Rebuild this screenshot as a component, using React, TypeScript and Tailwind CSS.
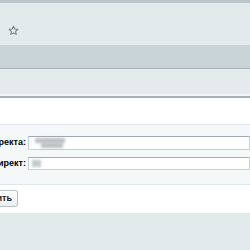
import React from "react";

const Star = () => (
  <svg width="11" height="11" viewBox="0 0 24 24" fill="none" stroke="#6f7d84" strokeWidth="2.2" strokeLinejoin="round">
    <path d="M12 2.5l2.9 6.1 6.6.8-4.9 4.5 1.3 6.6L12 17.2l-5.9 3.3 1.3-6.6-4.9-4.5 6.6-.8z" />
  </svg>
);

const Blur = ({ w, ml = 0 }: { w: number; ml?: number }) => (
  <span className="block h-[5px] bg-[#9aa3a7] blur-[1.5px] opacity-70" style={{ width: w, marginLeft: ml }} />
);

const App: React.FC = () => {
  return (
    <div className="h-screen w-full overflow-hidden bg-[#e1e9eb] font-['Liberation_Sans',Arial,sans-serif] text-[11px] text-black">
      {/* top toolbar */}
      <div className="h-[3px] bg-[#bcc7cb]" />
      <div className="flex h-[42px] items-center bg-[#e3eaec] pl-[8px] pt-[12px]">
        <Star />
      </div>
      <div className="h-[24px] border-b border-[#a9b4b9] bg-[#c9d4d9]" />
      <div className="h-[25px] bg-[#e4ebed]" />
      <div className="h-[2px] bg-[#f2f6f7]" />
      <div className="h-[2px] bg-[#a7b1b5]" />

      {/* content */}
      <div className="bg-white">
        <div className="h-[26px]" />
        <div className="border-y border-[#dfe7ea] bg-[#f4f8f9] pb-[14px] pt-[11px]">
          <div className="flex h-[14px] items-center">
            <div className="flex w-[26px] shrink-0 justify-end whitespace-nowrap text-[9px] font-bold">Адрес редиректа:</div>
            <div className="ml-[2px] h-[14px] flex-1 border border-[#c9d1d5] border-t-[#a2acb0] bg-white pl-[4px] pt-[1px]">
              <Blur w={30} ml={2} />
              <Blur w={22} ml={8} />
            </div>
          </div>
          <div className="mt-[7px] flex h-[13px] items-center">
            <div className="flex w-[26px] shrink-0 justify-end whitespace-nowrap text-[9px] font-bold">Редирект:</div>
            <div className="ml-[2px] flex h-[13px] flex-1 items-center border border-[#c9d1d5] border-t-[#a2acb0] bg-white pl-[3px]">
              <span className="block h-[7px] w-[9px] bg-[#a0a8ac] opacity-60 blur-[1px]" />
            </div>
          </div>
        </div>
        <div className="h-[28px] pt-[5px]">
          <div className="flex h-[17px] w-[18px] items-center justify-end overflow-visible rounded-r-[3px] border border-l-0 border-[#b8c2c6] bg-gradient-to-b from-white to-[#e9eef0] pr-[5px] whitespace-nowrap font-bold text-[9px] text-[#222]">
            Сохранить
          </div>
        </div>
      </div>
      <div className="h-full bg-[#e1e9eb]" />
    </div>
  );
};

export default App;
